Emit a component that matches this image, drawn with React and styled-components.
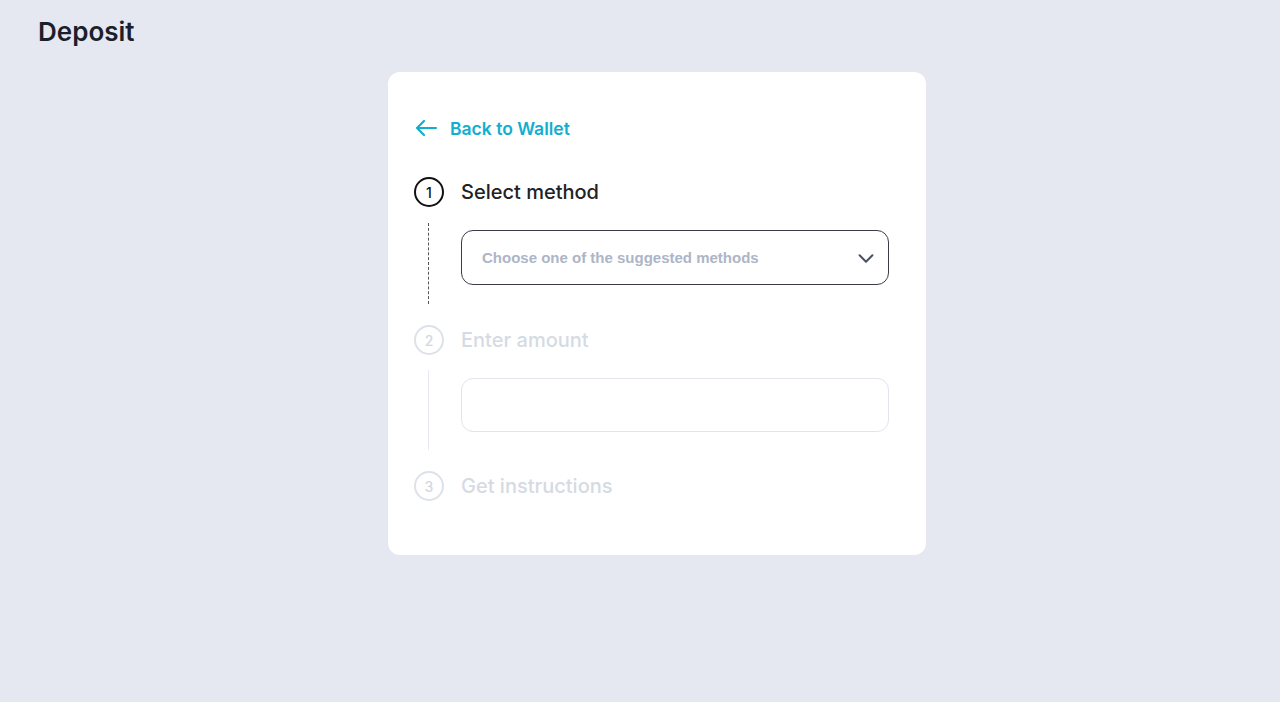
import styled, { createGlobalStyle } from "styled-components"

const GlobalStyle = createGlobalStyle`
  html, body {
    margin: 0;
    padding: 0;
    background: #e5e8f0;
    font-family: Inter, "Noto Sans", sans-serif;
  }
`

const Page = styled.div`
  min-height: 702px;
  padding: 15px 38px;
  box-sizing: border-box;
`

const Title = styled.h1`
  margin: 0;
  font-size: 26px;
  font-weight: 600;
  color: #1b1f2c;
  line-height: 34px;
`

const Card = styled.div`
  width: 538px;
  box-sizing: border-box;
  margin: 23px 0 0 350px;
  background: #fff;
  border-radius: 12px;
  padding: 45px 37px 54px 26px;
`

const BackLink = styled.a`
  display: flex;
  align-items: center;
  gap: 12px;
  height: 22px;
  color: #12aecf;
  font-size: 17.5px;
  font-weight: 600;
  text-decoration: none;
  cursor: pointer;
  margin-bottom: 38px;
`

const StepRow = styled.div`
  display: flex;
  align-items: center;
  gap: 17px;
  height: 30px;
`

const Circle = styled.div`
  width: 30px;
  height: 30px;
  box-sizing: border-box;
  border-radius: 50%;
  border: 2px solid ${p => (p.$active ? "#111" : "#dde1e9")};
  color: ${p => (p.$active ? "#111" : "#d2d7e1")};
  display: flex;
  align-items: center;
  justify-content: center;
  font-size: 14px;
  font-weight: 500;
`

const StepLabel = styled.span`
  font-size: 20px;
  font-weight: 500;
  color: ${p => (p.$active ? "#222" : "#d6dae3")};
`

const StepBody = styled.div`
  margin: ${p => (p.$active ? "16px 0 21px 14px" : "15px 0 21px 14px")};
  border-left: 1px ${p => (p.$active ? "dashed #555" : "solid #e6e9ef")};
  padding: ${p => (p.$active ? "7px 0 19px 32px" : "8px 0 18px 32px")};
`

const Select = styled.div`
  height: 55px;
  box-sizing: border-box;
  border: 1px solid #3a3d45;
  border-radius: 12px;
  display: flex;
  align-items: center;
  justify-content: space-between;
  padding: 0 11px 0 20px;
  cursor: pointer;
`

const Placeholder = styled.span`
  font-family: "Liberation Sans", Arial, sans-serif;
  font-weight: 700;
  font-size: 15px;
  color: #adb5c6;
`

const AmountInput = styled.div`
  height: 54px;
  box-sizing: border-box;
  border: 1px solid #e1e4eb;
  border-radius: 12px;
`

const ArrowLeft = () => (
  <svg width="24" height="24" viewBox="0 0 24 24" fill="none" stroke="#12aecf" strokeWidth="2.2" strokeLinecap="round" strokeLinejoin="round">
    <path d="M22 12H3M10 5l-7 7 7 7" />
  </svg>
)

const Chevron = () => (
  <svg width="22" height="22" viewBox="0 0 24 24" fill="none" stroke="#4a5162" strokeWidth="2.2" strokeLinecap="round" strokeLinejoin="round">
    <path d="M5 9l7 7 7-7" />
  </svg>
)

const App = () => {
  return (
    <Page>
      <GlobalStyle />
      <Title>Deposit</Title>
      <Card>
        <BackLink>
          <ArrowLeft />
          Back to Wallet
        </BackLink>

        <StepRow>
          <Circle $active>1</Circle>
          <StepLabel $active>Select method</StepLabel>
        </StepRow>
        <StepBody $active>
          <Select>
            <Placeholder>Choose one of the suggested methods</Placeholder>
            <Chevron />
          </Select>
        </StepBody>

        <StepRow>
          <Circle>2</Circle>
          <StepLabel>Enter amount</StepLabel>
        </StepRow>
        <StepBody>
          <AmountInput />
        </StepBody>

        <StepRow>
          <Circle>3</Circle>
          <StepLabel>Get instructions</StepLabel>
        </StepRow>
      </Card>
    </Page>
  )
}

export default App
